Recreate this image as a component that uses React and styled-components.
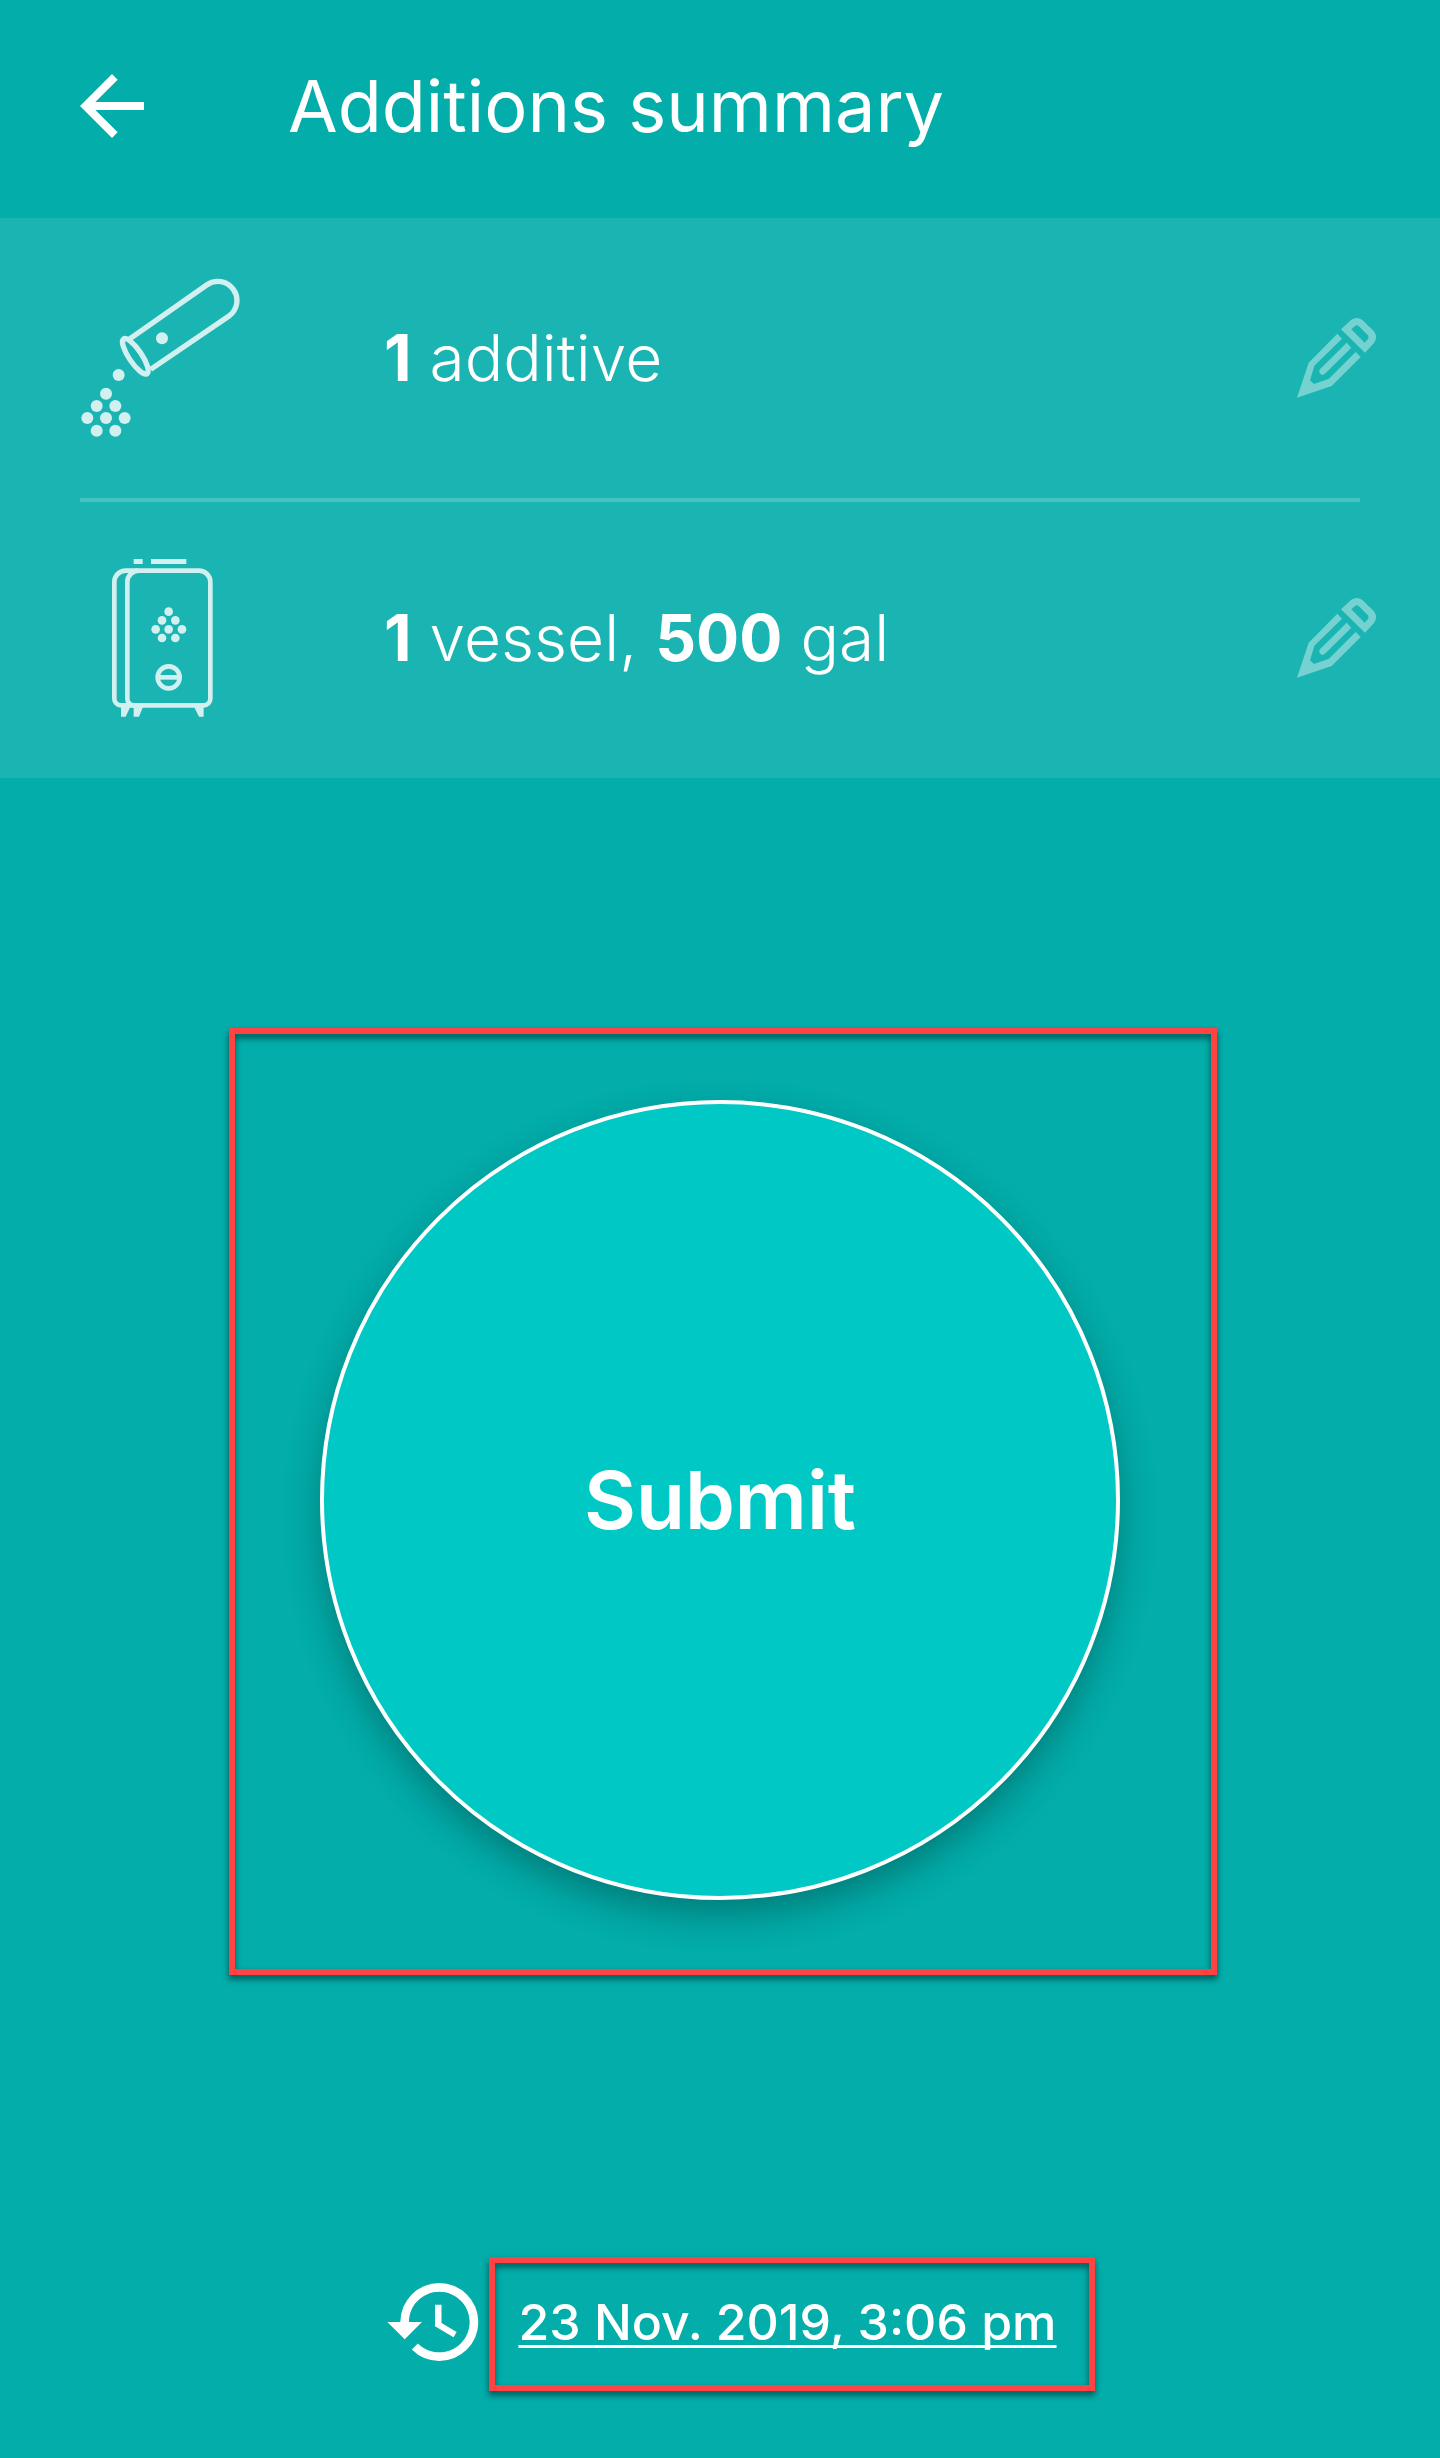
import React from "react";
import styled, { createGlobalStyle } from "styled-components";
import { MdArrowBack, MdHistory } from "react-icons/md";

const c_background = "#02adaa";
const c_panel = "#1ab5b2";
const c_divider = "#45c3c1";
const c_submit = "#00c8c5";
const c_icon = "#d1f0ef";
const c_edit = "#76d2d0";
const c_highlight = "#ff4242";

const GlobalStyle = createGlobalStyle`
  * {
    box-sizing: border-box;
  }

  body {
    margin: 0;
    background-color: ${c_background};
    color: #fff;
    font-family: Inter, "Open Sans", sans-serif;
  }

  button {
    padding: 0;
    border: none;
    background: none;
    color: inherit;
    font-family: inherit;
    cursor: pointer;
  }
`;

const Root = styled.div`
  display: flex;
  flex-direction: column;
  min-height: 100vh;
`;

const Header = styled.header`
  display: flex;
  align-items: center;
  gap: 128px;
  padding: 58px 64px 64px;
`;

const IconButton = styled.button`
  display: flex;
  color: ${(props) => props.$color};
`;

const Title = styled.h1`
  margin: 0;
  font-size: 72px;
  line-height: 80px;
  font-weight: 400;
`;

const Summary = styled.section`
  padding-top: 4px;
  background-color: ${c_panel};
`;

const Row = styled.div`
  display: grid;
  grid-template-columns: 160px 1fr 80px;
  column-gap: 144px;
  align-items: center;
  padding: 56px 63px 60px 80px;
`;

const Divider = styled.hr`
  height: 4px;
  margin: 0 80px;
  border: none;
  background-color: ${c_divider};
`;

const RowText = styled.p`
  margin: 0;
  font-size: 64px;
  line-height: 80px;
  font-weight: 350;

  strong {
    font-weight: 700;
  }
`;

const Main = styled.main`
  display: flex;
  flex: 1;
  align-items: center;
  justify-content: center;
`;

const Highlight = styled.div`
  position: relative;

  &::after {
    content: "";
    position: absolute;
    inset: ${(props) => props.$inset};
    border: 6px solid ${c_highlight};
    filter: drop-shadow(0 4px 3px rgba(0, 0, 0, 0.55));
    pointer-events: none;
  }
`;

const SubmitButton = styled.button`
  display: block;
  width: 800px;
  max-width: 80vw;
  aspect-ratio: 1;
  && {
    border: 4px solid #fff;
    background-color: ${c_submit};
  }
  border-radius: 50%;
  box-shadow: 0 16px 40px -4px rgba(0, 0, 0, 0.32);
  font-size: 80px;
  line-height: 80px;
  font-weight: 600;
`;

const Footer = styled.footer`
  display: flex;
  align-items: center;
  justify-content: center;
  gap: 31px;
  padding: 48px 0 84px;
`;

const DateLink = styled.a`
  display: block;
  color: inherit;
  font-size: 50px;
  line-height: 64px;
  font-weight: 500;
  text-decoration: underline;
  text-decoration-thickness: 3px;
  text-decoration-skip-ink: none;
  text-underline-offset: 5px;
`;

const Dots = ({ points, r }) =>
  points.map(([x, y]) => (
    <circle key={`${x}-${y}`} cx={x} cy={y} r={r} fill={c_icon} />
  ));

const AdditiveIcon = () => (
  <svg width="160" height="160" viewBox="0 0 480 480" fill="none">
    <g stroke={c_icon} strokeWidth="16">
      <path d="M147 184L380 21A57 57 0 0 1 447 114L212 274" />
      <ellipse cx="166" cy="235" rx="63" ry="19" transform="rotate(56 166 235)" />
    </g>
    <Dots
      r={18}
      points={[
        [246, 181],
        [116, 291],
        [78, 347],
        [50, 384],
        [106, 384],
        [22, 420],
        [78, 420],
        [134, 420],
        [50, 458],
        [106, 458],
      ]}
    />
  </svg>
);

const VesselIcon = () => (
  <svg width="160" height="160" viewBox="0 0 480 480" fill="none">
    <path
      d="M161 3h27v15h-27zM213 3h106v15H213zM123 446h28l-14 30h-14zM161 446h28l-12 30h-16zM342 446h29v30h-14z"
      fill={c_icon}
    />
    <g stroke={c_icon} strokeWidth="14">
      <path d="M176 38H137A34 34 0 0 0 103 72V422A20 20 0 0 0 123 442H162" />
      <path d="M176 38H357A34 34 0 0 1 391 72V422A20 20 0 0 1 371 442H162A20 20 0 0 1 142 422V72A34 34 0 0 1 176 38Z" />
      <circle cx="266" cy="358" r="33" />
      <path d="M235 358H297" />
    </g>
    <Dots
      r={13}
      points={[
        [266, 161],
        [246, 187],
        [286, 187],
        [227, 214],
        [266, 214],
        [306, 214],
        [246, 240],
        [286, 240],
      ]}
    />
  </svg>
);

const PencilIcon = () => (
  <svg width="80" height="80" viewBox="0 0 240 240" fill="currentColor">
    <path d="M121 47L35 134L0 239L104 204L191 117L176 102L96 182L51 198L39 187L52 143L135 62Z" />
    <path d="M149 74L163 89L83 168A10 10 0 0 1 69 154Z" />
    <path
      fillRule="evenodd"
      d="M132 34L162 6Q179 -6 196 6L231 40Q244 57 231 75L204 104ZM163 34L175 23Q180 20 185 24L213 52Q216 58 213 63L203 74Z"
    />
  </svg>
);

const App = () => {
  return (
    <Root>
      <GlobalStyle />
      <Header>
        <IconButton type="button" aria-label="Back" $color="#fff">
          <MdArrowBack size={96} />
        </IconButton>
        <Title>Additions summary</Title>
      </Header>
      <Summary>
        <Row>
          <AdditiveIcon />
          <RowText>
            <strong>1</strong> additive
          </RowText>
          <IconButton type="button" aria-label="Edit additives" $color={c_edit}>
            <PencilIcon />
          </IconButton>
        </Row>
        <Divider />
        <Row>
          <VesselIcon />
          <RowText>
            <strong>1</strong> vessel, <strong>500</strong> gal
          </RowText>
          <IconButton type="button" aria-label="Edit vessels" $color={c_edit}>
            <PencilIcon />
          </IconButton>
        </Row>
      </Summary>
      <Main>
        <Highlight $inset="-72px -97px -75px -91px">
          <SubmitButton type="submit">Submit</SubmitButton>
        </Highlight>
      </Main>
      <Footer>
        <MdHistory size={104} />
        <Highlight $inset="-33px -38px -37px -29px">
          <DateLink href="#date">23 Nov. 2019, 3:06 pm</DateLink>
        </Highlight>
      </Footer>
    </Root>
  );
};

export default App;
